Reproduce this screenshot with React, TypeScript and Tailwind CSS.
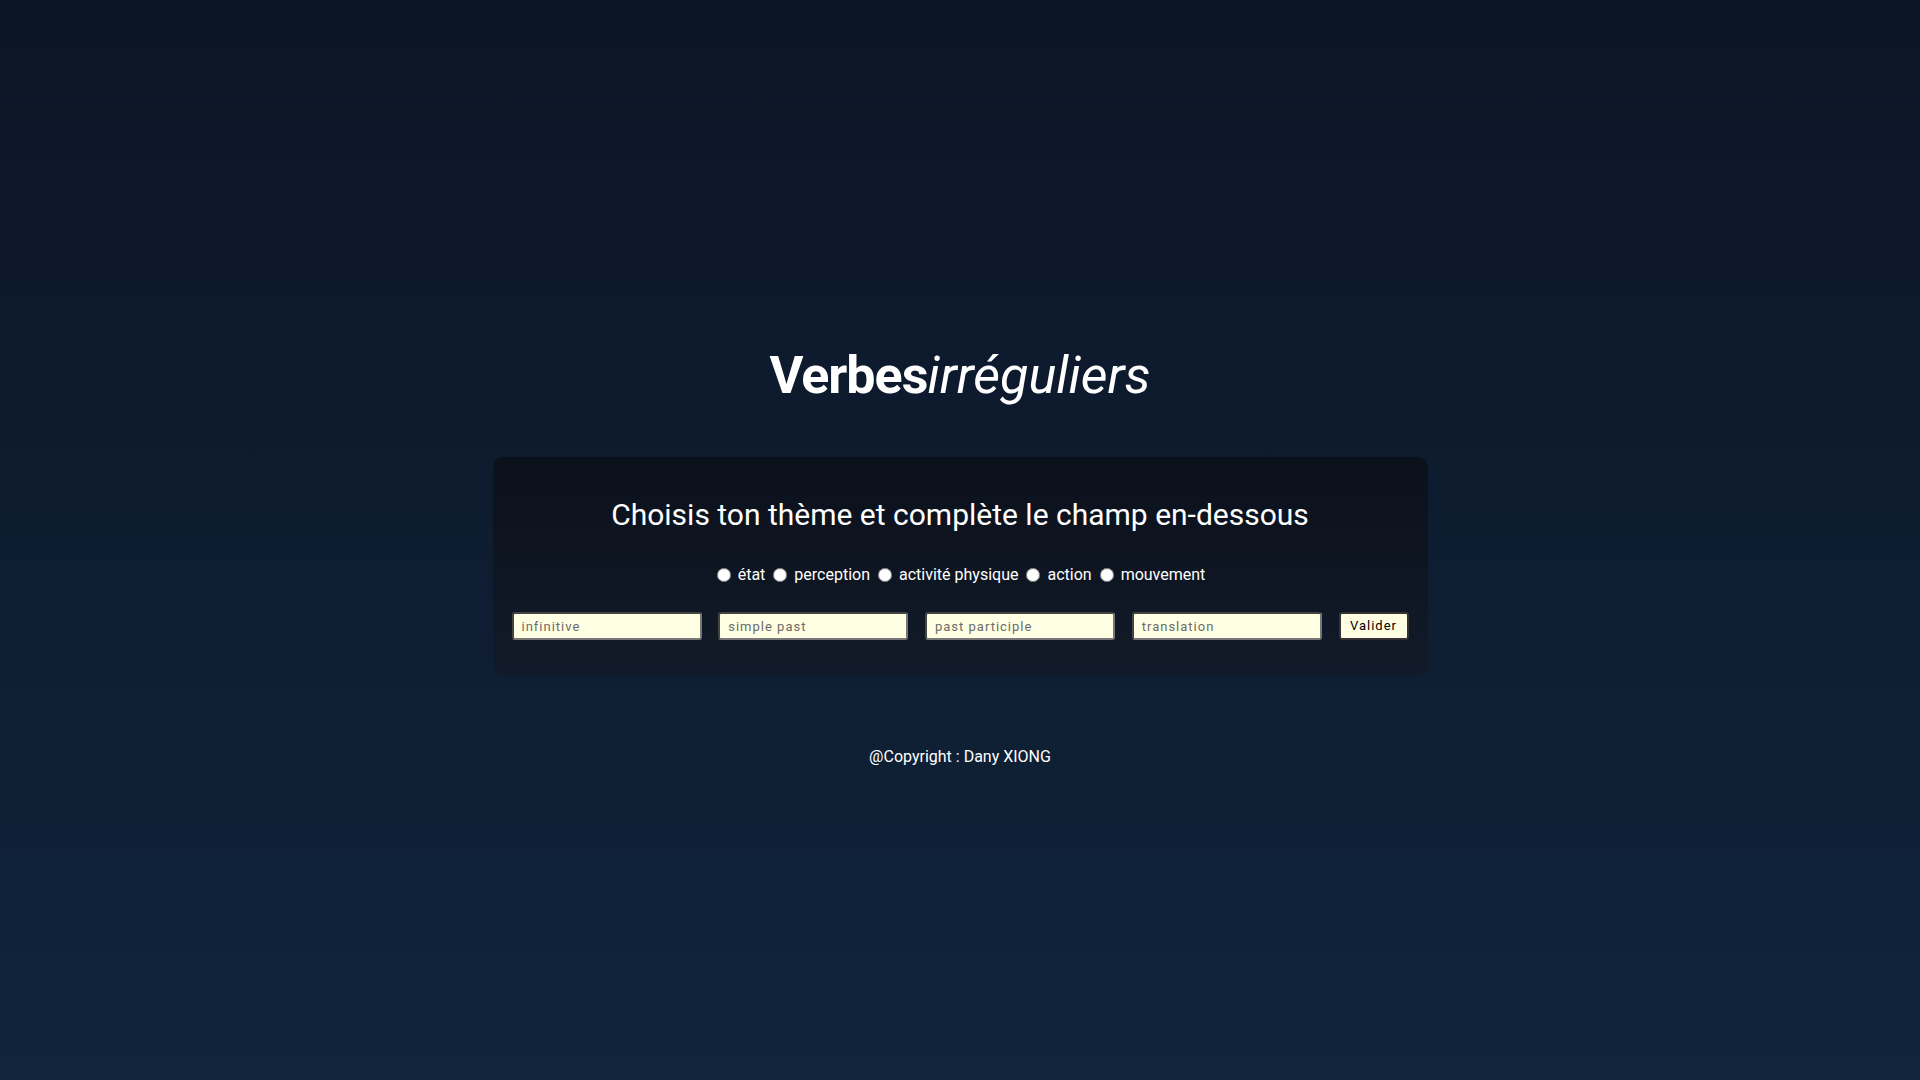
import { useState } from "react";

const themes = ["état", "perception", "activité physique", "action", "mouvement"];
const fields = ["infinitive", "simple past", "past participle", "translation"];

export default function App() {
  const [theme, setTheme] = useState("");

  return (
    <div className="min-h-screen w-full bg-gradient-to-b from-[#0c1526] to-[#10243b] font-['Roboto',sans-serif] text-white">
      <div className="flex flex-col items-center pt-[345px]">
        <h1 className="text-[52px] leading-[62px]">
          <span className="font-bold tracking-[-1px]">Verbes</span>
          <span className="italic">irréguliers</span>
        </h1>

        <div className="mt-[50px] w-[935px] rounded-[10px] bg-gradient-to-b from-[#0b111b] to-[#121a29] px-[19px] pt-[40px] pb-[36px]">
          <h2 className="text-center text-[30px] leading-[36px]">
            Choisis ton thème et complète le champ en-dessous
          </h2>

          <div className="mt-[32px] flex items-center justify-center text-[16px] leading-[20px]">
            {themes.map((t) => (
              <label key={t} className="flex items-center">
                <input
                  type="radio"
                  name="theme"
                  checked={theme === t}
                  onChange={() => setTheme(t)}
                  className="mr-[7px] ml-[5px] h-[14px] w-[14px]"
                />
                <span className="mr-[3px]">{t}</span>
              </label>
            ))}
          </div>

          <div className="mt-[27px] flex items-center justify-between">
            {fields.map((f) => (
              <input
                key={f}
                type="text"
                placeholder={f}
                className="h-[28px] w-[190px] rounded-[3px] border-2 border-t-[#444] border-l-[#444] border-r-[#777] border-b-[#777] bg-[#ffffe3] px-[8px] text-[13px] tracking-[1px] text-black outline-none placeholder:text-[#6b6b6b]"
              />
            ))}
            <button className="h-[28px] w-[70px] rounded-[3px] border-2 border-[#333] bg-[#ffffe3] text-[13px] tracking-[1px] text-black">
              Valider
            </button>
          </div>
        </div>

        <p className="mt-[69px] text-[16px] leading-[24px]">@Copyright : Dany XIONG</p>
      </div>
    </div>
  );
}
